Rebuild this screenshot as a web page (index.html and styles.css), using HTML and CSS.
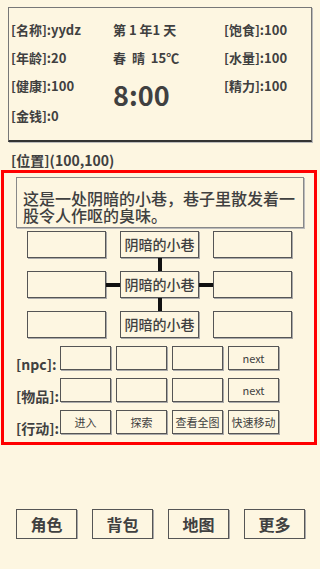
FILE: index.html
```html
<!DOCTYPE html>
<html>
<head>
	<title>小巷</title>
	<meta name="viewport" content="width=device-width, initial-scale=1">
	<link rel="stylesheet" href="styles.css">
</head>

<body>
	<!-- Status panel -->
	<div class="status">
		<div class="cell">[名称]:yydz</div>
		<div class="cell">第 1 年1 天</div>
		<div class="cell">[饱食]:100</div>
		<div class="cell">[年龄]:20</div>
		<div class="cell">春&nbsp; 晴&nbsp; 15℃</div>
		<div class="cell">[水量]:100</div>
		<div class="cell">[健康]:100</div>
		<div class="cell clock">8:00</div>
		<div class="cell">[精力]:100</div>
		<div class="cell">[金钱]:0</div>
	</div>

	<div class="position">[位置](100,100)</div>

	<!-- Scene -->
	<section class="scene">
		<div class="desc">这是一处阴暗的小巷，巷子里散发着一股令人作呕的臭味。</div>

		<div class="map">
			<div class="room"></div><div></div>
			<div class="room">阴暗的小巷</div><div></div>
			<div class="room"></div>

			<div></div><div></div>
			<div class="link-v"><span></span></div><div></div>
			<div></div>

			<div class="room"></div><div class="link-h"><span></span></div>
			<div class="room">阴暗的小巷</div><div class="link-h"><span></span></div>
			<div class="room"></div>

			<div></div><div></div>
			<div class="link-v"><span></span></div><div></div>
			<div></div>

			<div class="room"></div><div></div>
			<div class="room">阴暗的小巷</div><div></div>
			<div class="room"></div>
		</div>

		<div class="row">
			<div class="label">[npc]:</div>
			<button class="slot"></button>
			<button class="slot"></button>
			<button class="slot"></button>
			<button class="slot small">next</button>
		</div>
		<div class="row">
			<div class="label">[物品]:</div>
			<button class="slot"></button>
			<button class="slot"></button>
			<button class="slot"></button>
			<button class="slot small">next</button>
		</div>
		<div class="row">
			<div class="label">[行动]:</div>
			<button class="slot small">进入</button>
			<button class="slot small">探索</button>
			<button class="slot small">查看全图</button>
			<button class="slot small">快速移动</button>
		</div>
	</section>

	<footer>
		<button class="tab">角色</button>
		<button class="tab">背包</button>
		<button class="tab">地图</button>
		<button class="tab">更多</button>
	</footer>
</body>
</html>
```

FILE: styles.css
```css
body {
  margin: 0;
  background-color: #fdf6e1;
  color: #404040;
  font-family: "Noto Sans CJK SC", "Noto Sans", sans-serif;
  font-weight: bold;
}

button {
  font-family: inherit;
  font-weight: bold;
  color: #404040;
  background-color: #fdf6e1;
  padding: 0;
  cursor: pointer;
}

/* Status panel */
.status {
  margin: 7px 8px 0 8px;
  height: 135px;
  box-sizing: border-box;
  padding: 8px 0 0 2px;
  border: 1px solid #777;
  border-bottom: 2px solid #333;
  box-shadow: 1px 1px 0 #bbb;
  display: grid;
  grid-template-columns: 102px 111px 1fr;
  grid-template-rows: 28px 28px 30px 28px;
  font-size: 13px;
}
.cell {
  line-height: 28px;
  white-space: nowrap;
}
.clock {
  grid-row: 3 / 5;
  grid-column: 2;
  font-size: 27px;
  line-height: 30px;
  margin-top: 8px;
}
.status .cell:nth-child(9) {
  grid-row: 3;
  grid-column: 3;
}
.status .cell:nth-child(10) {
  grid-row: 4;
  grid-column: 1;
}

.position {
  margin: 8px 0 0 11px;
  font-size: 14px;
  line-height: 20px;
}

/* Scene box */
.scene {
  margin-left: 1px;
  width: 316px;
  height: 275px;
  box-sizing: border-box;
  border: 3px solid #ff0000;
  padding: 4px 0 0 12px;
}

.desc {
  width: 288px;
  height: 51px;
  box-sizing: border-box;
  border: 1px solid #888;
  box-shadow: 1px 1px 0 #bbb;
  padding: 12px 0 0 6px;
  font-size: 16px;
  line-height: 17px;
  font-weight: 500;
}

.map {
  margin: 3px 0 0 11px;
  display: grid;
  grid-template-columns: 79px 14px 79px 14px 79px;
  grid-template-rows: 27px 13px 27px 13px 27px;
}
.room {
  box-sizing: border-box;
  border: 1px solid #555;
  box-shadow: 1px 1px 0 #aaa;
  font-size: 14px;
  line-height: 25px;
  text-align: center;
  font-weight: 500;
}
.link-v {
  display: flex;
  justify-content: center;
}
.link-v span {
  width: 4px;
  background-color: #111;
}
.link-h {
  display: flex;
  align-items: center;
}
.link-h span {
  height: 4px;
  width: 100%;
  background-color: #111;
}

.row {
  display: flex;
  align-items: center;
  gap: 5px;
  margin-top: 8px;
  height: 24px;
}
.label {
  width: 39px;
  font-size: 14px;
  white-space: nowrap;
  margin-top: 12px;
}
.slot {
  width: 51px;
  height: 24px;
  box-sizing: border-box;
  border: 1px solid #555;
  box-shadow: 1px 1px 0 #aaa;
}
.small {
  font-size: 11px;
  font-weight: normal;
}

/* Bottom tabs */
footer {
  margin: 64px 0 0 16px;
  display: flex;
  gap: 15px;
}
.tab {
  width: 61px;
  height: 30px;
  border: 1px solid #555;
  box-shadow: 1px 1px 0 #aaa;
  font-size: 16px;
}
```
